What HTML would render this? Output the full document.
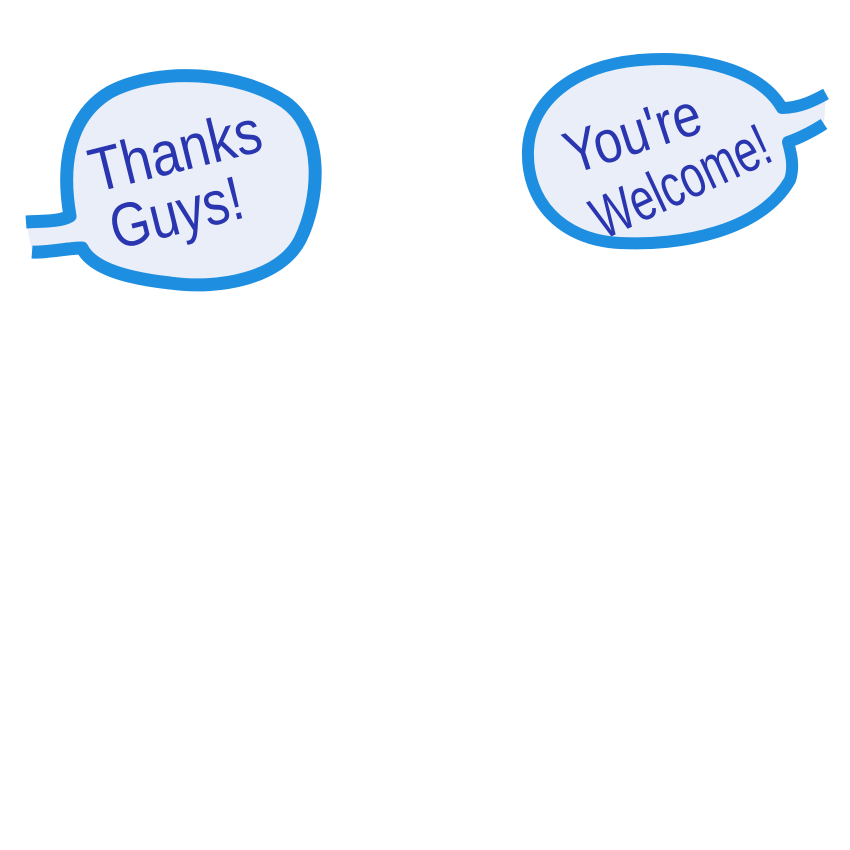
<!DOCTYPE html>
<html><head><meta charset="utf-8"><style>
html,body{margin:0;padding:0;background:#fff;width:850px;height:850px;overflow:hidden}
svg{display:block}
</style></head><body>
<svg width="850" height="850" viewBox="0 0 850 850" xmlns="http://www.w3.org/2000/svg">
<path d="M26 222 C40 221 60 222 70 216 C62 170 66 118 110 92 C160 66 240 72 285 102 C325 130 320 200 300 240 C280 278 220 290 170 283 C125 278 92 268 82 248 C68 248 45 253 32 252 Z" fill="#e9eef8"/>
<path d="M26 222 C40 221 60 222 70 216 C62 170 66 118 110 92 C160 66 240 72 285 102 C325 130 320 200 300 240 C280 278 220 290 170 283 C125 278 92 268 82 248 C68 248 45 253 32 252" fill="none" stroke="#1e8ee0" stroke-width="13" stroke-linejoin="round"/>
<path d="M826 94 C815 100 800 108 782 108 C760 70 700 55 640 60 C575 65 530 100 528 150 C526 200 560 240 620 243 C680 246 760 232 790 180 C795 165 790 150 788 142 C800 138 815 130 824 124 Z" fill="#e9eef8"/>
<path d="M826 94 C815 100 800 108 782 108 C760 70 700 55 640 60 C575 65 530 100 528 150 C526 200 560 240 620 243 C680 246 760 232 790 180 C795 165 790 150 788 142 C800 138 815 130 824 124" fill="none" stroke="#1e8ee0" stroke-width="12" stroke-linejoin="round"/>
<g font-family="'Liberation Sans',sans-serif" fill="#2a35b0" text-anchor="middle" lengthAdjust="spacingAndGlyphs">
<text x="0" y="22" transform="translate(175,150) rotate(-14)" font-size="62" textLength="175" lengthAdjust="spacingAndGlyphs">Thanks</text>
<text x="0" y="22" transform="translate(176,212) rotate(-14)" font-size="62" textLength="135" lengthAdjust="spacingAndGlyphs">Guys!</text>
<text x="0" y="22" transform="translate(632,132) rotate(-18)" font-size="60" textLength="140" lengthAdjust="spacingAndGlyphs">You're</text>
<text x="0" y="22" transform="translate(680,180) rotate(-25)" font-size="60" textLength="190" lengthAdjust="spacingAndGlyphs">Welcome!</text>
</g>
</svg>
</body></html>
